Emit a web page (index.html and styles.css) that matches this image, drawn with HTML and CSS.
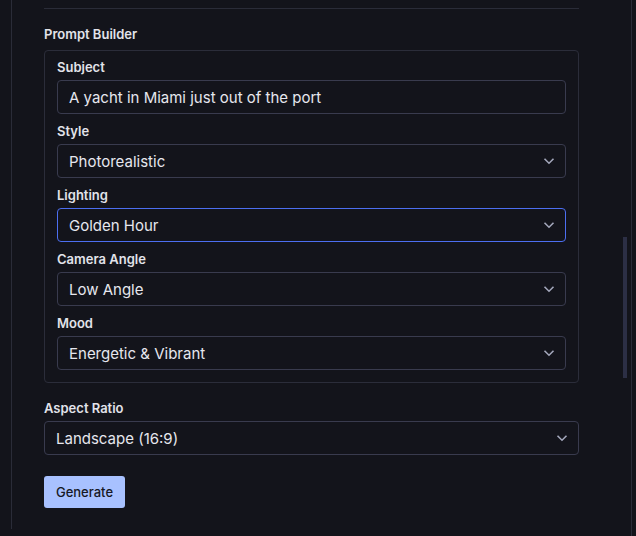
FILE: index.html
```html
<!DOCTYPE html>
<html>
<head>
<meta charset="utf-8">
<link rel="stylesheet" href="styles.css">
</head>
<body>
<div class="panel">
  <div class="rail">
    <div class="content">
      <div class="prev-section"></div>
      <div class="group-title">Prompt Builder</div>
      <div class="builder">
        <div class="field">
          <label class="label">Subject</label>
          <div class="control"><span class="value">A yacht in Miami just out of the port</span></div>
        </div>
        <div class="field">
          <label class="label">Style</label>
          <div class="control select"><span class="value">Photorealistic</span>
            <svg class="chev" width="12" height="8" viewBox="0 0 12 8"><path d="M1.5 1.8 6 6.2 10.5 1.8" fill="none" stroke="#a4a8bc" stroke-width="1.6"/></svg></div>
        </div>
        <div class="field">
          <label class="label">Lighting</label>
          <div class="control select focus"><span class="value">Golden Hour</span>
            <svg class="chev" width="12" height="8" viewBox="0 0 12 8"><path d="M1.5 1.8 6 6.2 10.5 1.8" fill="none" stroke="#a4a8bc" stroke-width="1.6"/></svg></div>
        </div>
        <div class="field">
          <label class="label">Camera Angle</label>
          <div class="control select"><span class="value">Low Angle</span>
            <svg class="chev" width="12" height="8" viewBox="0 0 12 8"><path d="M1.5 1.8 6 6.2 10.5 1.8" fill="none" stroke="#a4a8bc" stroke-width="1.6"/></svg></div>
        </div>
        <div class="field">
          <label class="label">Mood</label>
          <div class="control select"><span class="value">Energetic &amp; Vibrant</span>
            <svg class="chev" width="12" height="8" viewBox="0 0 12 8"><path d="M1.5 1.8 6 6.2 10.5 1.8" fill="none" stroke="#a4a8bc" stroke-width="1.6"/></svg></div>
        </div>
      </div>
      <div class="outer-field">
        <label class="label">Aspect Ratio</label>
        <div class="control select"><span class="value">Landscape (16:9)</span>
          <svg class="chev" width="12" height="8" viewBox="0 0 12 8"><path d="M1.5 1.8 6 6.2 10.5 1.8" fill="none" stroke="#a4a8bc" stroke-width="1.6"/></svg></div>
      </div>
      <button class="btn">Generate</button>
    </div>
  </div>
  <div class="thumb"></div>
</div>
</body>
</html>
```
FILE: styles.css
```css
* { box-sizing: border-box; }
html, body { margin: 0; padding: 0; background: #13141b; }
body {
  font-family: Inter, "Noto Sans", sans-serif;
  color: #e4e5ec;
  width: 636px;
  height: 536px;
  overflow: hidden;
}
.panel {
  position: relative;
  margin-left: 11px;
  width: 621px;
  height: 536px;
  border-right: 1px solid #2a2c38;
}
.rail {
  height: 529px;
  border-left: 1px solid #2a2c38;
}
.content {
  padding-left: 32px;
  width: 567px;
}
.prev-section {
  height: 9px;
  border-bottom: 1px solid #2a2c38;
}
.group-title {
  margin-top: 17px;
  font-size: 13px;
  font-weight: 600;
  line-height: 16px;
  height: 16px;
  color: #e2e3ea;
}
.builder {
  margin-top: 8px;
  border: 1px solid #2b2d3a;
  border-radius: 4px;
  padding: 8px 12px 12px 12px;
  display: flex;
  flex-direction: column;
  gap: 9px;
}
.field, .outer-field {
  display: flex;
  flex-direction: column;
  gap: 5px;
}
.outer-field { margin-top: 17px; }
.label {
  font-size: 13px;
  font-weight: 600;
  line-height: 16px;
  color: #e2e3ea;
}
.control {
  height: 34px;
  border: 1px solid #393b4e;
  border-radius: 4px;
  display: flex;
  align-items: center;
  padding: 0 10px 0 11px;
  font-size: 15px;
  color: #e6e7ee;
}
.control.focus { border-color: #4c6ef0; }
.value { flex: 1; }
.btn {
  margin-top: 21px;
  height: 32px;
  width: 81px;
  border: none;
  border-radius: 3px;
  background: #a8c1ff;
  color: #161824;
  font-family: Inter, "Noto Sans", sans-serif;
  font-size: 13px;
  font-weight: 500;
  padding: 0;
}
.thumb {
  position: absolute;
  left: 612px;
  top: 237px;
  width: 4px;
  height: 141px;
  background: #2c2f45;
}
```
